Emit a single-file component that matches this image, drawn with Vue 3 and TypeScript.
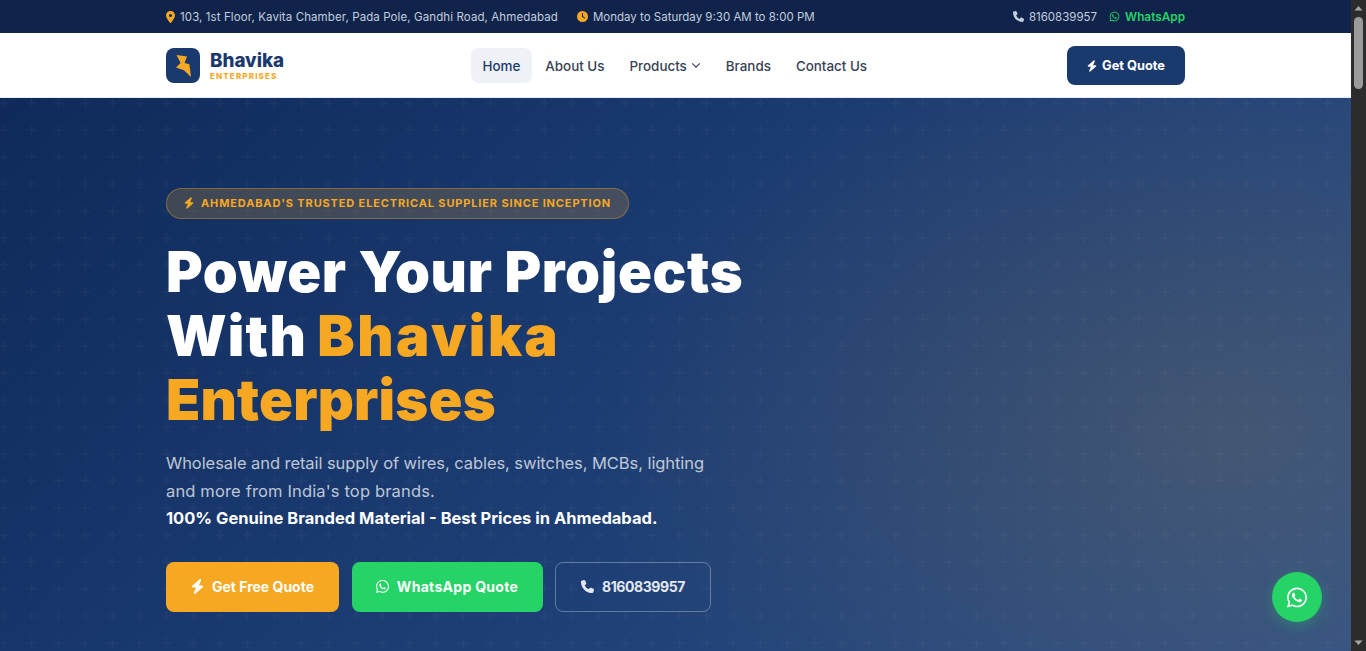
<template>
  <div class="page">
    <div class="site">
      <div class="topbar">
        <div class="wrap topbar-row">
          <div class="top-left">
            <span class="top-item">
              <svg class="ico amber pin" viewBox="0 0 384 512"><path :d="icons.pin" /></svg>
              <span class="t-addr">103, 1st Floor, Kavita Chamber, Pada Pole, Gandhi Road, Ahmedabad</span>
            </span>
            <span class="top-item">
              <svg class="ico amber" viewBox="0 0 512 512"><path :d="icons.clock" /></svg>
              <span>Monday to Saturday 9:30 AM to 8:00 PM</span>
            </span>
          </div>
          <div class="top-right">
            <span class="top-item">
              <svg class="ico" viewBox="0 0 512 512"><path :d="icons.phone" /></svg>
              <span>8160839957</span>
            </span>
            <span class="top-item wa">
              <svg class="ico" viewBox="0 0 448 512"><path :d="icons.whatsapp" /></svg>
              <span>WhatsApp</span>
            </span>
          </div>
        </div>
      </div>

      <nav class="navbar">
        <div class="wrap nav-row">
          <div class="brand">
            <div class="logo">
              <svg viewBox="0 0 15 22"><path d="M.5 0 11 1.6 8.6 8 13.4 9.2 15 22 8 15.2 0 12.6 4.6 8z" /></svg>
            </div>
            <div class="brand-text">
              <div class="brand-name">Bhavika</div>
              <div class="brand-sub">ENTERPRISES</div>
            </div>
          </div>
          <ul class="menu">
            <li v-for="item in menu" :key="item.label" class="menu-item" :class="{ active: item.active }">
              {{ item.label }}
              <svg v-if="item.caret" class="caret" viewBox="0 0 12 8"><path d="M1.5 1.5 6 6l4.5-4.5" /></svg>
            </li>
          </ul>
          <button class="quote-btn">
            <svg class="ico" viewBox="0 0 448 512"><path :d="icons.bolt" /></svg>
            Get Quote
          </button>
        </div>
      </nav>

      <section class="hero">
        <div class="wrap hero-body">
          <div class="pill">
            <svg class="ico" viewBox="0 0 448 512"><path :d="icons.bolt" /></svg>
            <span>AHMEDABAD'S TRUSTED ELECTRICAL SUPPLIER SINCE INCEPTION</span>
          </div>
          <h1>
            <span class="line l1">Power Your Projects</span>
            <span class="line l2">With <em>Bhavika</em></span>
            <span class="line l3"><em>Enterprises</em></span>
          </h1>
          <p class="lead">
            <span class="line p1">Wholesale and retail supply of wires, cables, switches, MCBs, lighting</span>
            <span class="line p2">and more from India's top brands.</span>
            <strong class="line">100% Genuine Branded Material - Best Prices in Ahmedabad.</strong>
          </p>
          <div class="actions">
            <button class="btn amber-btn">
              <svg class="ico" viewBox="0 0 448 512"><path :d="icons.bolt" /></svg>
              Get Free Quote
            </button>
            <button class="btn green-btn">
              <svg class="ico" viewBox="0 0 448 512"><path :d="icons.whatsapp" /></svg>
              WhatsApp Quote
            </button>
            <button class="btn ghost-btn">
              <svg class="ico" viewBox="0 0 512 512"><path :d="icons.phone" /></svg>
              8160839957
            </button>
          </div>
        </div>
        <div class="float-wa">
          <svg viewBox="0 0 448 512"><path :d="icons.whatsapp" /></svg>
        </div>
      </section>
    </div>

    <div class="scrollbar">
      <svg class="arrow" viewBox="0 0 15 17"><path d="M3.5 10.5 7.5 6l4 4.5z" /></svg>
      <div class="track"><div class="thumb"></div></div>
      <svg class="arrow" viewBox="0 0 15 17"><path d="M3.5 6.5 7.5 11l4-4.5z" /></svg>
    </div>
  </div>
</template>

<script setup lang="ts">
interface MenuItem {
  label: string;
  active?: boolean;
  caret?: boolean;
}

const menu: MenuItem[] = [
  { label: 'Home', active: true },
  { label: 'About Us' },
  { label: 'Products', caret: true },
  { label: 'Brands' },
  { label: 'Contact Us' }
];

const icons = {
  pin: 'M215.7 499.2C267 435 384 279.4 384 192C384 86 298 0 192 0S0 86 0 192c0 87.4 117 243 168.3 307.2c12.3 15.3 35.1 15.3 47.4 0zM192 128a64 64 0 1 1 0 128 64 64 0 1 1 0-128z',
  clock: 'M256 0a256 256 0 1 1 0 512A256 256 0 1 1 256 0zM232 120V256c0 8 4 15.5 10.7 20l96 64c11 7.4 25.9 4.4 33.3-6.7s4.4-25.9-6.7-33.3L280 243.2V120c0-13.3-10.7-24-24-24s-24 10.7-24 24z',
  phone: 'M164.9 24.6c-7.7-18.6-28-28.5-47.4-23.2l-88 24C12.1 30.2 0 46 0 64C0 311.4 200.6 512 448 512c18 0 33.8-12.1 38.6-29.5l24-88c5.3-19.4-4.6-39.7-23.2-47.4l-96-40c-16.3-6.8-35.2-2.1-46.3 11.6L304.7 368C234.3 334.7 177.3 277.7 144 207.3L193.3 167c13.7-11.2 18.4-30 11.6-46.3l-40-96z',
  bolt: 'M349.4 44.6c5.9-13.7 1.5-29.7-10.6-38.5s-28.6-8.1-39.9 1.8l-256 224c-10 8.8-13.6 22.9-8.9 35.3S50.7 288 64 288H175.5L98.6 467.4c-5.9 13.7-1.5 29.7 10.6 38.5s28.6 8.1 39.9-1.8l256-224c10-8.8 13.6-22.9 8.9-35.3s-16.6-20.7-30-20.7H272.5L349.4 44.6z',
  whatsapp: 'M380.9 97.1C339 55.1 283.2 32 223.9 32c-122.4 0-222 99.6-222 222 0 39.1 10.2 77.3 29.6 111L0 480l117.7-30.9c32.4 17.7 68.9 27 106.1 27h.1c122.3 0 224.1-99.6 224.1-222 0-59.3-25.2-115-67.1-157zm-157 341.6c-33.2 0-65.7-8.9-94-25.7l-6.7-4-69.8 18.3L72 359.2l-4.4-7c-18.5-29.4-28.2-63.3-28.2-98.2 0-101.7 82.8-184.5 184.6-184.5 49.3 0 95.6 19.2 130.4 54.1 34.8 34.9 56.2 81.2 56.1 130.5 0 101.8-84.9 184.6-186.6 184.6zm101.2-138.2c-5.5-2.8-32.8-16.2-37.9-18-5.1-1.9-8.8-2.8-12.5 2.8-3.7 5.6-14.3 18-17.6 21.8-3.2 3.7-6.5 4.2-12 1.4-32.6-16.3-54-29.1-75.5-66-5.7-9.8 5.7-9.1 16.3-30.3 1.8-3.7.9-6.9-.5-9.7-1.4-2.8-12.5-30.1-17.1-41.2-4.5-10.8-9.1-9.3-12.5-9.5-3.2-.2-6.9-.2-10.6-.2-3.7 0-9.7 1.4-14.8 6.9-5.1 5.6-19.4 19-19.4 46.3 0 27.3 19.9 53.7 22.6 57.4 2.8 3.7 39.1 59.7 94.8 83.8 35.2 15.2 49 16.5 66.6 13.9 10.7-1.6 32.8-13.4 37.4-26.4 4.6-13 4.6-24.1 3.2-26.4-1.3-2.5-5-3.9-10.5-6.6z'
};
</script>

<style>
html,
body {
  margin: 0;
  height: 100%;
  overflow: hidden;
}
</style>

<style scoped>
.page {
  display: flex;
  height: 651px;
  overflow: hidden;
  font-family: 'Inter', 'Open Sans', sans-serif;
}

.site {
  flex: 1;
  min-width: 0;
  display: flex;
  flex-direction: column;
}

.wrap {
  width: 1019px;
  margin: 0 auto;
}

.ico {
  fill: currentColor;
  flex: none;
}

.amber {
  color: #f7a823;
}

/* Top bar */
.topbar {
  height: 33px;
  background: #10244b;
  color: #c3cede;
  font-size: 11.5px;
}

.topbar-row {
  height: 100%;
  display: flex;
  align-items: center;
  justify-content: space-between;
}

.top-left,
.top-right {
  display: flex;
  align-items: center;
  gap: 12px;
}

.top-left {
  gap: 19px;
}

.top-item {
  display: flex;
  align-items: center;
  gap: 5px;
}

.top-item .ico {
  width: 11px;
  height: 11px;
}

.top-item .pin {
  width: 9px;
  height: 12px;
}

.t-addr {
  letter-spacing: 0.1px;
  white-space: nowrap;
}

.wa {
  color: #25d366;
  font-size: 11.8px;
  font-weight: 600;
}

/* Nav */
.navbar {
  height: 65px;
  background: #fff;
  box-shadow: inset 0 -1px 0 #e8edf3;
}

.nav-row {
  height: 100%;
  display: flex;
  align-items: center;
}

.brand {
  display: flex;
  align-items: center;
  gap: 10px;
  width: 305px;
}

.logo {
  width: 34px;
  height: 35px;
  border-radius: 8px;
  background: #1a3a6e;
  display: flex;
  align-items: center;
  justify-content: center;
}

.logo svg {
  width: 15px;
  height: 22px;
  fill: #f7a823;
}

.brand-name {
  font-size: 18.8px;
  line-height: 21px;
  font-weight: 800;
  color: #1a3a6e;
}

.brand-sub {
  font-size: 8px;
  line-height: 11px;
  font-weight: 800;
  letter-spacing: 1.15px;
  color: #f7a823;
}

.menu {
  list-style: none;
  margin: 0;
  padding: 0;
  display: flex;
  align-items: center;
  gap: 2px;
}

.menu-item {
  height: 35px;
  padding: 0 11.5px;
  border-radius: 8px;
  display: flex;
  align-items: center;
  gap: 4px;
  font-size: 13.4px;
  font-weight: 500;
  color: #374355;
}

.menu-item.active {
  background: #eef1f5;
  color: #1a3a6e;
}

.caret {
  width: 10px;
  height: 7px;
  fill: none;
  stroke: currentColor;
  stroke-width: 1.4;
}

.quote-btn {
  margin-left: auto;
  width: 118px;
  height: 39px;
  border: none;
  border-radius: 8px;
  background: #1a3a6e;
  color: #fff;
  font-family: inherit;
  font-size: 12.8px;
  font-weight: 700;
  display: flex;
  align-items: center;
  justify-content: center;
  gap: 5px;
}

.quote-btn .ico {
  width: 10px;
  height: 12px;
}

/* Hero */
.hero {
  flex: 1;
  position: relative;
  overflow: hidden;
  background-color: #16305f;
  background-image:
    url("data:image/svg+xml,%3Csvg xmlns='http://www.w3.org/2000/svg' width='27' height='27'%3E%3Cpath d='M4.5 0v10M0 5h9.5M26.5 5H27' stroke='%23ffffff' stroke-opacity='.03' stroke-width='1.5'/%3E%3C/svg%3E"),
    radial-gradient(ellipse 640px 420px at 1224px 335px, rgba(247, 168, 35, 0.14), rgba(247, 168, 35, 0.08) 45%, rgba(247, 168, 35, 0) 100%),
    linear-gradient(135deg, #0f2a5a 0%, #1a3a70 42%, #2c5088 100%);
}

.hero-body {
  padding-top: 90px;
}

.pill {
  width: 463px;
  height: 31px;
  box-sizing: border-box;
  border: 1px solid rgba(247, 168, 35, 0.35);
  border-radius: 16px;
  background: rgba(247, 168, 35, 0.2);
  color: #f7a823;
  display: flex;
  align-items: center;
  gap: 7px;
  padding-left: 17px;
  padding-bottom: 1px;
  font-size: 11px;
  font-weight: 700;
  letter-spacing: 0.86px;
  white-space: nowrap;
}

.pill .ico {
  width: 10px;
  height: 12px;
}

.line {
  display: block;
  white-space: nowrap;
}

h1 {
  margin: 21px 0 0;
  font-size: 56px;
  line-height: 64px;
  font-weight: 900;
  color: #fff;
}

h1 em {
  font-style: normal;
  color: #f7a823;
}

.l1 {
  letter-spacing: 0.67px;
}

.l2 {
  letter-spacing: 1.2px;
  word-spacing: -2px;
}

.l2 em {
  letter-spacing: 2.5px;
}

.l3 {
  letter-spacing: 0.2px;
}

.lead {
  margin: 18px 0 0;
  font-size: 16.5px;
  line-height: 27.5px;
  color: rgba(255, 255, 255, 0.72);
}

.p1 {
  letter-spacing: -0.07px;
}

.p2 {
  letter-spacing: 0.15px;
}

.lead strong {
  color: #fff;
  font-weight: 700;
}

.actions {
  display: flex;
  gap: 12.5px;
  margin-top: 29px;
}

.btn {
  height: 50px;
  box-sizing: border-box;
  border: none;
  border-radius: 8px;
  color: #fff;
  font-family: inherit;
  font-size: 14px;
  font-weight: 700;
  display: flex;
  align-items: center;
  justify-content: center;
  gap: 8px;
}

.btn .ico {
  width: 13px;
  height: 15px;
}

.amber-btn {
  width: 173px;
  background: #f7a823;
}

.green-btn {
  width: 191px;
  background: #25d366;
  letter-spacing: 0.3px;
}

.ghost-btn {
  width: 156px;
  background: transparent;
  border: 1px solid rgba(255, 255, 255, 0.3);
  color: #e3e8f0;
  letter-spacing: -0.4px;
}

.float-wa {
  position: absolute;
  left: 1272px;
  top: 474px;
  width: 50px;
  height: 50px;
  border-radius: 50%;
  background: #25d366;
  box-shadow: 0 4px 14px rgba(37, 211, 102, 0.3);
  display: flex;
  align-items: center;
  justify-content: center;
}

.float-wa svg {
  width: 20px;
  height: 23px;
  fill: #fff;
}

/* Browser scrollbar */
.scrollbar {
  width: 15px;
  flex: none;
  background: #2c2c2c;
  display: flex;
  flex-direction: column;
}

.arrow {
  width: 15px;
  height: 17px;
  fill: #a5a5a5;
  flex: none;
}

.track {
  flex: 1;
}

.thumb {
  width: 9px;
  height: 72px;
  margin-left: 3px;
  border-radius: 5px;
  background: #9b9b9b;
}
</style>
